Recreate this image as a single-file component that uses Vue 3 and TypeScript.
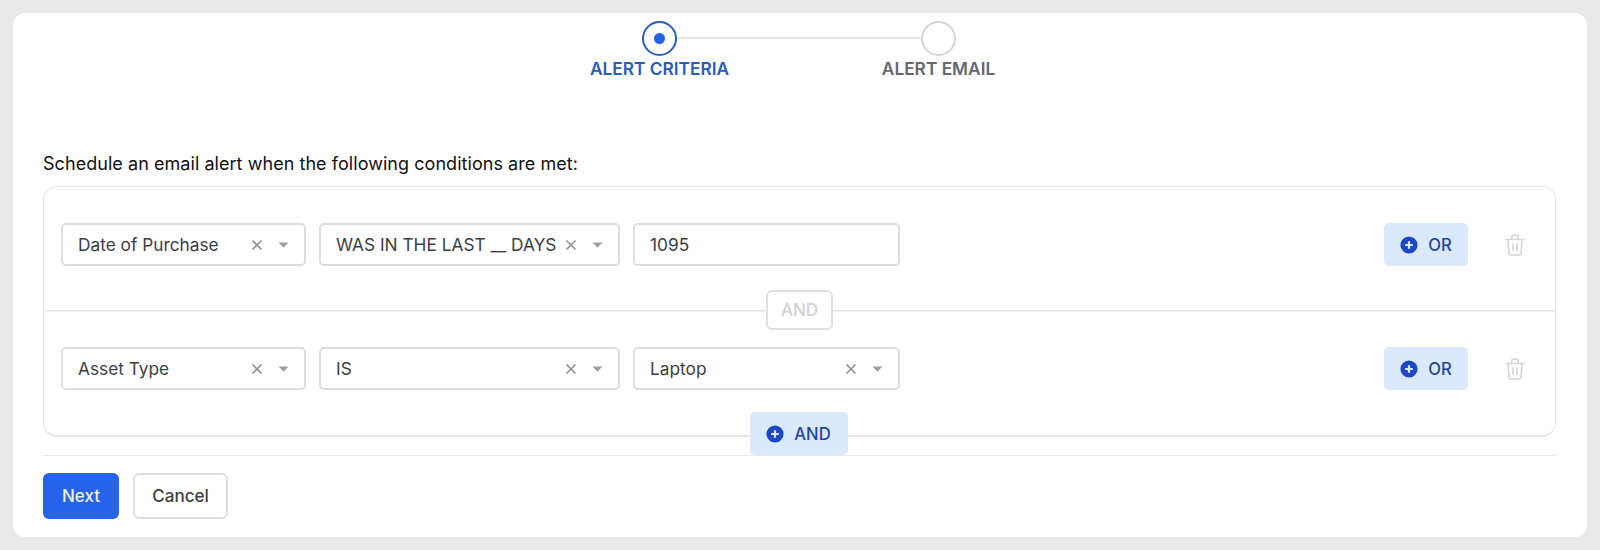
<script setup lang="ts">
interface Field { label?: string; input?: boolean; width: number }
interface Rule { fields: Field[] }
const rules: Rule[] = [
  { fields: [
    { label: 'Date of Purchase', width: 245 },
    { label: 'WAS IN THE LAST __ DAYS', width: 301 },
    { label: '1095', input: true, width: 267 },
  ] },
  { fields: [
    { label: 'Asset Type', width: 245 },
    { label: 'IS', width: 301 },
    { label: 'Laptop', width: 267 },
  ] },
]
</script>

<template>
  <div class="page">
    <main class="card">
      <div class="stepper">
        <div class="step active">
          <span class="circle"><span class="dot"></span></span>
          <span class="step-label">ALERT CRITERIA</span>
        </div>
        <div class="step">
          <span class="circle"></span>
          <span class="step-label">ALERT EMAIL</span>
        </div>
      </div>

      <p class="intro">Schedule an email alert when the following conditions are met:</p>

      <section class="rules">
        <template v-for="(rule, i) in rules" :key="i">
          <div class="rule">
            <div class="fields">
              <div v-for="f in rule.fields" :key="f.label" class="field" :style="{ width: f.width + 'px' }">
                <span class="value">{{ f.label }}</span>
                <template v-if="!f.input">
                  <svg class="clear" width="12" height="12" viewBox="0 0 12 12"><path d="M1.5 1.5l9 9M10.5 1.5l-9 9" stroke="#8f9296" stroke-width="1.7" fill="none" /></svg>
                  <svg class="caret" width="11" height="6" viewBox="0 0 11 6"><path d="M.5 .5h10L5.5 5.7z" fill="#9a9da1" /></svg>
                </template>
              </div>
            </div>
            <button class="add">
              <svg width="18" height="18" viewBox="0 0 18 18"><circle cx="9" cy="9" r="8.6" fill="#1d47c4" /><path d="M9 5.2v7.6M5.2 9h7.6" stroke="#dbe9fd" stroke-width="2.2" /></svg>
              OR
            </button>
            <svg class="trash" width="20" height="22" viewBox="0 0 20 22" fill="none" stroke="#d4d5d8" stroke-width="1.6" stroke-linecap="round" stroke-linejoin="round">
              <path d="M1 5.5h18M3 5.5l1 14a1.6 1.6 0 0 0 1.6 1.5h8.8a1.6 1.6 0 0 0 1.6-1.5l1-14M6.8 5.5V2.4A1.2 1.2 0 0 1 8 1.2h4a1.2 1.2 0 0 1 1.2 1.2v3.1M8 10v6.5M12 10v6.5" />
            </svg>
          </div>
          <div v-if="i < rules.length - 1" class="joiner"><span class="and-pill">AND</span></div>
        </template>
        <button class="add add-and">
          <svg width="18" height="18" viewBox="0 0 18 18"><circle cx="9" cy="9" r="8.6" fill="#1d47c4" /><path d="M9 5.2v7.6M5.2 9h7.6" stroke="#dbe9fd" stroke-width="2.2" /></svg>
          AND
        </button>
      </section>

      <footer class="footer">
        <button class="btn primary">Next</button>
        <button class="btn cancel">Cancel</button>
      </footer>
    </main>
  </div>
</template>

<style>
html, body { margin: 0; background: #e9e9e9; }
</style>

<style scoped>
.page {
  height: 550px;
  box-sizing: border-box;
  padding: 13px;
  background: #e9e9e9;
  font-family: Inter, "Noto Sans", sans-serif;
  color: #374151;
}
.card {
  height: 524px;
  box-sizing: border-box;
  background: #fff;
  border-radius: 12px;
  padding: 8px 30px 0;
}
.stepper {
  display: grid;
  grid-template-columns: 279px 279px;
  justify-content: center;
  height: 133px;
  padding-right: 2px;
}
.step {
  position: relative;
  display: flex;
  flex-direction: column;
  align-items: center;
}
.step.active::after {
  content: "";
  position: absolute;
  top: 16px;
  left: calc(50% + 17px);
  width: 245px;
  height: 2px;
  background: #e5e6e9;
}
.circle {
  width: 35px;
  height: 35px;
  box-sizing: border-box;
  border: 2px solid #d3d4d8;
  border-radius: 50%;
  display: flex;
  align-items: center;
  justify-content: center;
}
.active .circle { border-color: #2a5bc4; }
.dot { width: 11px; height: 11px; border-radius: 50%; background: #2563eb; }
.step-label {
  margin-top: 3px;
  font-size: 17.3px;
  line-height: 20px;
  font-weight: 600;
  color: #66676c;
  white-space: nowrap;
}
.active .step-label { color: #2c5cb8; }
.intro {
  margin: 0 0 12px;
  font-size: 18px;
  line-height: 20px;
  letter-spacing: 0.05px;
  color: #111;
}
.rules {
  position: relative;
  height: 251px;
  box-sizing: border-box;
  margin-right: 1px;
  border: 1px solid #e5e6e9;
  border-bottom-width: 2px;
  border-radius: 14px;
  padding-top: 36px;
}
.rule {
  display: flex;
  align-items: center;
  height: 43px;
  padding: 0 16px 0 17px;
}
.fields { display: flex; gap: 13px; flex: 1; }
.field {
  height: 43px;
  box-sizing: border-box;
  border: 2px solid #dcdde0;
  border-radius: 5px;
  display: flex;
  align-items: center;
  padding: 0 14px 0 15px;
  font-size: 17.3px;
  color: #3b3e44;
}
.value { flex: 1; white-space: nowrap; }
.clear { margin-left: 8px; }
.caret { margin-left: 15px; margin-right: 1px; }
.add {
  display: inline-flex;
  align-items: center;
  justify-content: center;
  gap: 10px;
  width: 84px;
  height: 43px;
  border: 0;
  border-radius: 5px;
  background: #dbe9fd;
  color: #24459e;
  font: 500 16.6px Inter, "Noto Sans", sans-serif;
  padding: 0;
}
.trash { margin: 0 14px 0 37px; }
.joiner {
  height: 81px;
  box-sizing: border-box;
  padding-top: 24px;
  display: flex;
  align-items: flex-start;
  justify-content: center;
  background: linear-gradient(#e5e6e9, #e5e6e9) 0 44px / 100% 1.5px no-repeat;
}
.and-pill {
  width: 67px;
  height: 40px;
  box-sizing: border-box;
  border: 2px solid #dfe0e3;
  border-radius: 6px;
  background: #fff;
  color: #d0d1d5;
  display: flex;
  align-items: center;
  justify-content: center;
  font-size: 17px;
  font-weight: 500;
}
.add-and {
  position: absolute;
  left: calc(50% - 1px);
  bottom: -20px;
  width: 98px;
  transform: translateX(-50%);
}
.footer {
  margin-top: 18px;
  margin-right: 1px;
  border-top: 1.5px solid #e8e9eb;
  padding-top: 17px;
  display: flex;
  gap: 14px;
}
.btn {
  height: 46px;
  box-sizing: border-box;
  padding: 0;
  border: 2px solid #dcdde0;
  border-radius: 6px;
  background: #fff;
  color: #3b3e44;
  font: 500 17px Inter, "Noto Sans", sans-serif;
}
.cancel { width: 95px; }
.primary {
  width: 76px;
  border: 0;
  background: #2563eb;
  color: #eaf1fe;
}
</style>
